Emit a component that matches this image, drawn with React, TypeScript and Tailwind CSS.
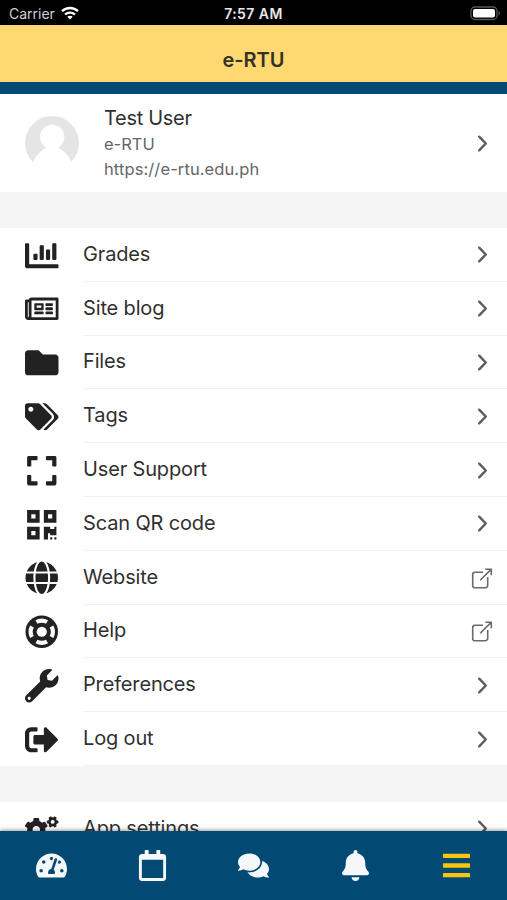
import type { ComponentType } from "react";
import {
  FaBars, FaBell, FaChartBar, FaCogs, FaComments, FaExpand, FaFolder, FaGlobe, FaQrcode,
  FaRegCalendar, FaRegNewspaper, FaSignOutAlt, FaTachometerAlt, FaTags, FaWrench,
} from "react-icons/fa";

type Item = { label: string; icon: ComponentType<{ className?: string }>; external?: boolean };

function LifeRing({ className }: { className?: string }) {
  return (
    <svg className={className} viewBox="0 0 34 34">
      <circle cx="17" cy="17" r="16.500" fill="currentColor" />
      <circle cx="17" cy="17" r="11.300" fill="none" stroke="#fff" strokeWidth="4.200" pathLength="360" strokeDasharray="57 33" strokeDashoffset="28.500" />
      <circle cx="17" cy="17" r="5.200" fill="#fff" />
    </svg>
  );
}

const items: Item[] = [
  { label: "Grades", icon: FaChartBar },
  { label: "Site blog", icon: FaRegNewspaper },
  { label: "Files", icon: FaFolder },
  { label: "Tags", icon: FaTags },
  { label: "User Support", icon: FaExpand },
  { label: "Scan QR code", icon: FaQrcode },
  { label: "Website", icon: FaGlobe, external: true },
  { label: "Help", icon: LifeRing, external: true },
  { label: "Preferences", icon: FaWrench },
  { label: "Log out", icon: FaSignOutAlt },
];

function Chevron() {
  return (
    <svg className="mr-[19px] h-[18px] w-3 shrink-0" viewBox="0 0 12 18" fill="none" stroke="#5c5c5c" strokeWidth="2.4" strokeLinecap="round" strokeLinejoin="round">
      <path d="M3.200 2.700l6.600 6.800-6.600 6.800" />
    </svg>
  );
}

function External() {
  return (
    <svg className="mt-px mr-[14px] h-[22px] w-[22px] shrink-0" viewBox="0 0 22 22" fill="none" stroke="#6a6a6a" strokeWidth="1.600">
      <path d="M12 5.300H4A2.300 2.300 0 0 0 1.700 7.600v10.800A2.300 2.300 0 0 0 4 20.700h10.400a2.300 2.300 0 0 0 2.300-2.300V10" />
      <path d="M14.300 2.200h6v6M20.100 2.400L9.200 13.200" />
    </svg>
  );
}

function Row({ item, last }: { item: Item; last?: boolean }) {
  const Icon = item.icon;
  return (
    <li className="flex h-[53.8px] items-stretch pl-[25px]">
      <span className="flex w-[58px] shrink-0 items-center pt-px">
        <Icon className="h-[33.5px] w-[33.5px] text-[#222]" />
      </span>
      <span className={`flex flex-1 items-center border-b ${last ? "border-[#f5f5f5]" : "border-[#f1f1f1]"}`}>
        <span className="flex-1 pb-px text-[20px] leading-6 tracking-[-0.15px] text-[#303030]">{item.label}</span>
        {item.external ? <External /> : <Chevron />}
      </span>
    </li>
  );
}

function StatusBar() {
  return (
    <div className="grid h-[25px] shrink-0 grid-cols-3 items-center bg-black pt-[3px] text-[14px] leading-none">
      <div className="flex items-center gap-[6px] pl-[9px] text-[#d0d0d0]">
        <span>Carrier</span>
        <svg className="-mt-[2px] h-[14px] w-[18px]" viewBox="0 0 18 14" fill="none" stroke="#fff" strokeWidth="2.300">
          <path d="M1 5.200C5.500.9 12.500.9 17 5.200M4 8.500c2.800-2.600 7.200-2.600 10 0" />
          <path d="M9 13.500l-2.700-2.800c1.500-1.300 3.900-1.300 5.400 0z" fill="#fff" stroke="none" />
        </svg>
      </div>
      <div className="text-center font-semibold tracking-[0.45px] whitespace-nowrap text-[#e8e8e8]">7:57 AM</div>
      <div className="flex justify-end pr-[6px]">
        <svg className="-mt-px h-[15px] w-[31px]" viewBox="0 0 31 15">
          <rect x="1" y="1" width="26" height="12.500" rx="3.800" fill="#000" stroke="#555" strokeWidth="1.300" />
          <rect x="3" y="3" width="22" height="8.600" rx="2" fill="#fff" />
          <path d="M28.500 5c1.800.5 1.800 4 0 4.500z" fill="#555" />
        </svg>
      </div>
    </div>
  );
}

export default function App() {
  return (
    <div className="flex h-[900px] w-[507px] flex-col overflow-hidden bg-white font-[Inter,'Liberation_Sans',sans-serif]">
      <StatusBar />
      <header className="flex h-[69px] shrink-0 items-center justify-center border-b-[12.500px] border-[#024a73] bg-[#fed972] pt-3">
        <h1 className="text-[20px] leading-6 font-semibold text-[#353024]">e-RTU</h1>
      </header>

      <main className="min-h-0 flex-1 overflow-hidden">
        <section className="flex h-[97.500px] items-center pl-[25px]">
          <svg className="h-[54px] w-[54px] shrink-0" viewBox="0 0 54 54">
            <circle cx="27" cy="27" r="27" fill="#e5e5e5" />
            <circle cx="27.200" cy="21" r="12.200" fill="#fff" />
            <path d="M7.500 48C10.500 39 17 33 22 32h10.500c5 1 11.500 7 14.500 16v6H7.500z" fill="#fff" />
          </svg>
          <div className="ml-[25px] flex-1">
            <h2 className="text-[20px] leading-[27px] tracking-[-0.3px] text-[#303030]">Test User</h2>
            <p className="text-[16.500px] leading-[25px] text-[#666]">e-RTU</p>
            <p className="text-[16.500px] leading-6 tracking-[0.1px] text-[#666]">https://e-rtu.edu.ph</p>
          </div>
          <Chevron />
        </section>
        <div className="h-[36.500px] bg-[#f5f5f5]" />
        <ul>
          {items.map((item, i) => (
            <Row key={item.label} item={item} last={i === items.length - 1} />
          ))}
        </ul>
        <div className="h-[36px] bg-[#f5f5f5]" />
        <ul>
          <Row item={{ label: "App settings", icon: FaCogs }} last />
        </ul>
      </main>

      <nav className="relative grid h-[69px] shrink-0 grid-cols-5 items-center justify-items-center bg-[#024a73] pl-px text-[#f5f8fa] shadow-[0_-1px_4px_rgba(0,0,0,0.4)]">
        <FaTachometerAlt className="h-[31px] w-[31px]" />
        <FaRegCalendar className="h-[31px] w-[31px]" />
        <FaComments className="h-[31px] w-[31px]" />
        <FaBell className="h-[31px] w-[31px]" />
        <FaBars className="h-[31px] w-[31px] text-[#f8c60d]" />
      </nav>
    </div>
  );
}
